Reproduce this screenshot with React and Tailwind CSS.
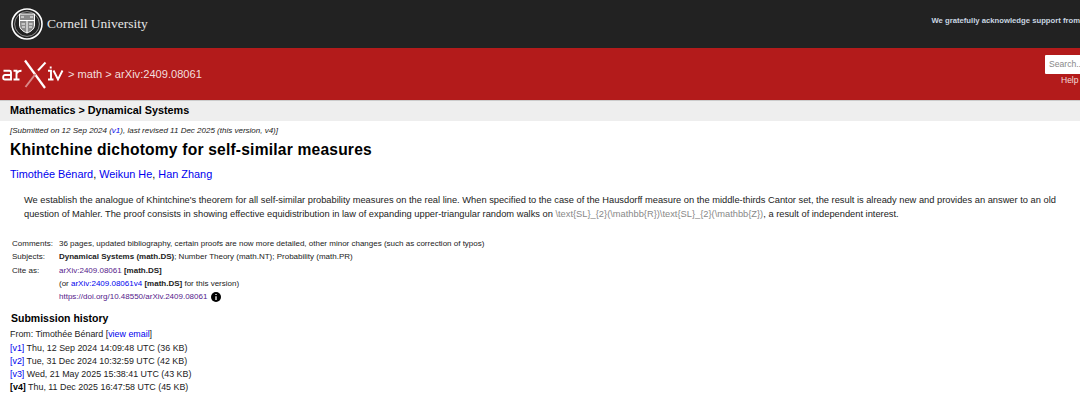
import React from "react";

const link = "text-[#0000ee]";
const visited = "text-[#551a8b]";
const latexTitle = "\\text{SL}_{2}(\\mathbb{R})\\text{SL}_{2}(\\mathbb{Z})";

function CornellSeal() {
  return (
    <svg width="32" height="32" viewBox="0 0 32 32" fill="none" stroke="#fff" className="shrink-0">
      <circle cx="16" cy="16" r="15" strokeWidth="1.600" />
      <circle cx="16" cy="16" r="12.400" strokeWidth="0.700" opacity="0.7" />
      <path d="M8.500 6h15v11c0 4-3.500 6.500-7.500 8-4-1.500-7.500-4-7.500-8z" strokeWidth="1" fill="#8a8a8a" />
      <path d="M8.500 12.500h15M16 12.500v12.500M10 9h3M19 9h3M10.500 16h3.500M18 16h3.500M11 19h3M18 19h3" strokeWidth="1.100" />
    </svg>
  );
}

function ArxivLogo() {
  return (
    <svg width="66" height="32" viewBox="0 0 66 32" fill="none" stroke="#fff" className="shrink-0">
      <path d="M1.500 12.800h6a1.500 1.500 0 0 1 1.500 1.500v7.200H3a1.800 1.800 0 0 1-1.800-1.800v-.8A1.800 1.800 0 0 1 3 17H9" strokeWidth="1.900" />
      <path d="M11.500 12.800h3v8.700M11.500 21.500h6M14.500 15.500c1-1.800 2.500-2.700 5-2.700" strokeWidth="1.900" />
      <path d="M23 2.500L43 30" strokeWidth="2.200" />
      <path d="M23.500 29l10-13" strokeWidth="2" stroke="#d98a8a" />
      <path d="M36 12.500l7.500-8" strokeWidth="2" />
      <path d="M46 12.800h3v8.700M46 21.500h5.500M48.700 8.500v2" strokeWidth="1.900" />
      <path d="M51.500 12.500l4.500 9 4.500-9" strokeWidth="1.900" />
    </svg>
  );
}

function MetaRow({ label, children }) {
  return (
    <div className="flex h-[13.300px] items-center">
      <div className="w-[47px] shrink-0">{label}</div>
      <div>{children}</div>
    </div>
  );
}

export default function App() {
  return (
    <div className="h-[400px] w-[1080px] overflow-hidden bg-white font-['Liberation_Sans',Arial,sans-serif] text-black">
      <header className="flex h-[48px] items-center justify-between bg-[#222222] pl-[11px]">
        <div className="flex items-center gap-[4px]">
          <CornellSeal />
          <span className="font-['Liberation_Serif',serif] text-[13.500px] text-[#e6e6e6]">Cornell University</span>
        </div>
        <span className="mb-[7px] text-[7.700px] font-bold whitespace-nowrap text-[#c9d5e0]">We gratefully acknowledge support from</span>
      </header>

      <div className="flex h-[52px] items-center justify-between bg-[#b31b1b]">
        <div className="flex items-center pl-[2px]">
          <ArxivLogo />
          <span className="text-[11.100px] text-[#f2dede]">&gt; math &gt; arXiv:2409.08061</span>
        </div>
        <div className="flex w-[35px] flex-col gap-[1px] self-start pt-[7px]">
          <div className="h-[19px] overflow-hidden rounded-l-[1px] bg-white pl-[4px] text-[8.600px] leading-[19px] whitespace-nowrap text-[#888888]">Search...</div>
          <div className="pl-[16px] text-[8.500px] leading-[11px] text-[#f4dcdc]">Help</div>
        </div>
      </div>

      <div className="flex h-[21px] items-center border-t border-[#cccccc] bg-[#eeeeee] pb-[2px] pl-[10px] text-[10.800px] font-bold">
        Mathematics &gt; Dynamical Systems
      </div>

      <main className="pl-[10px]">
        <p className="pt-[4px] text-[8px] leading-[12px] text-[#222222] italic">
          [Submitted on 12 Sep 2024 (<span className={link}>v1</span>), last revised 11 Dec 2025 (this version, v4)]
        </p>
        <h1 className="mt-[2px] text-[15.600px] leading-[21px] font-bold tracking-[0.2px]">Khintchine dichotomy for self-similar measures</h1>
        <p className={`mt-[7px] text-[10.900px] leading-[14px] ${link}`}>
          Timothée Bénard<span className="text-black">,</span> Weikun He<span className="text-black">,</span> Han Zhang
        </p>
        <p className="mt-[12px] ml-[14px] w-[1046px] text-[9.300px] leading-[14px] text-[#222222]">
          We establish the analogue of Khintchine's theorem for all self-similar probability measures on the real line. When specified to the case of the Hausdorff measure on the middle-thirds Cantor set, the result is already new and provides an answer to an old question of Mahler. The proof consists in showing effective equidistribution in law of expanding upper-triangular random walks on <span className="text-[#888888]">{latexTitle}</span>, a result of independent interest.
        </p>

        <div className="mt-[16.500px] ml-[2px] text-[8px] text-[#222222]">
          <MetaRow label="Comments:">36 pages, updated bibliography, certain proofs are now more detailed, other minor changes (such as correction of typos)</MetaRow>
          <MetaRow label="Subjects:"><b>Dynamical Systems (math.DS)</b>; Number Theory (math.NT); Probability (math.PR)</MetaRow>
          <MetaRow label="Cite as:"><span className={visited}>arXiv:2409.08061</span> <b>[math.DS]</b></MetaRow>
          <MetaRow label="">(or <span className={link}>arXiv:2409.08061v4</span> <b>[math.DS]</b> for this version)</MetaRow>
          <MetaRow label="">
            <span className="flex items-center gap-[4px]">
              <span className={visited}>https://doi.org/10.48550/arXiv.2409.08061</span>
              <svg width="10" height="10" viewBox="0 0 10 10">
                <circle cx="5" cy="5" r="5" fill="#000" />
                <path d="M5 2v.9M5 4.200V8" stroke="#fff" strokeWidth="1.300" />
              </svg>
            </span>
          </MetaRow>
        </div>

        <h2 className="mt-[7.500px] ml-[1px] text-[10.500px] leading-[14px] font-bold">Submission history</h2>
        <div className="mt-[3px] text-[8.900px] leading-[13.200px] text-[#222222]">
          <p>From: Timothée Bénard [<span className={link}>view email</span>]</p>
          <p><span className={link}>[v1]</span> Thu, 12 Sep 2024 14:09:48 UTC (36 KB)</p>
          <p><span className={link}>[v2]</span> Tue, 31 Dec 2024 10:32:59 UTC (42 KB)</p>
          <p><span className={link}>[v3]</span> Wed, 21 May 2025 15:38:41 UTC (43 KB)</p>
          <p><b className="text-black">[v4]</b> Thu, 11 Dec 2025 16:47:58 UTC (45 KB)</p>
        </div>
      </main>
    </div>
  );
}
